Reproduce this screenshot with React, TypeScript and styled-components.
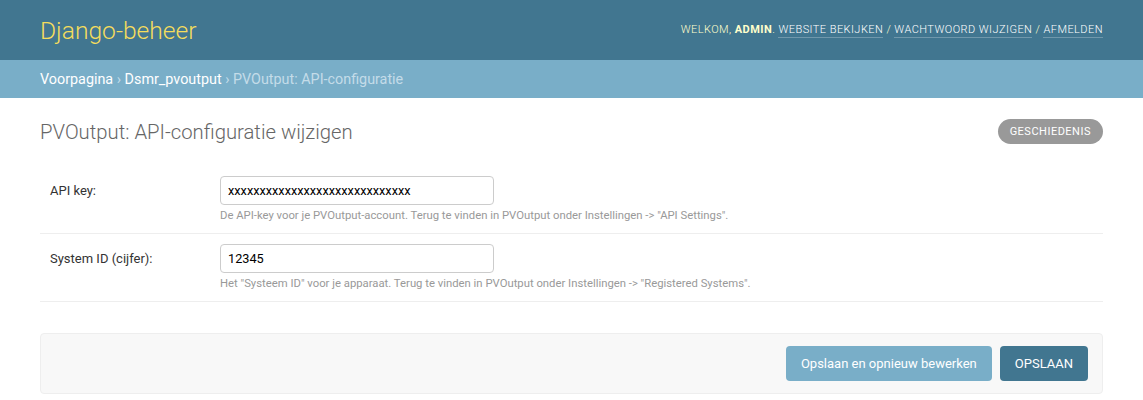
import React from "react";
import styled, { createGlobalStyle } from "styled-components";

const GlobalStyle = createGlobalStyle`
  html, body {
    margin: 0;
    padding: 0;
    background: #fff;
  }
  body {
    font-family: Roboto, "Liberation Sans", sans-serif;
    font-size: 14px;
    color: #333;
  }
  * {
    box-sizing: border-box;
  }
`;

const Header = styled.header`
  height: 60px;
  padding: 0 40px;
  background: #417690;
  color: #ffc;
  display: flex;
  align-items: center;
  justify-content: space-between;
`;

const Branding = styled.h1`
  margin: 0;
  font-size: 24.6px;
  font-weight: 300;
  color: #f5dd5d;
`;

const UserTools = styled.div`
  font-size: 11px;
  letter-spacing: 0.45px;
  text-transform: uppercase;
  font-weight: 300;
  color: #ffc;
  margin-top: -1px;

  strong {
    font-weight: 700;
  }
`;

const ToolLink = styled.a`
  color: #fff;
  text-decoration: none;
  border-bottom: 1px solid rgba(255, 255, 255, 0.25);
  padding-bottom: 1px;
`;

const Breadcrumbs = styled.nav`
  height: 38px;
  padding: 0 40px;
  background: #79aec8;
  color: #c4dce8;
  font-size: 14.35px;
  display: flex;
  align-items: center;
`;

const Crumb = styled.a`
  color: #fff;
  text-decoration: none;
`;

const Content = styled.main`
  padding: 20px 40px;
`;

const TitleRow = styled.div`
  display: flex;
  align-items: flex-start;
  justify-content: space-between;
  margin-bottom: 20px;
`;

const Title = styled.h1`
  margin: 0;
  padding-top: 1px;
  font-size: 20.3px;
  line-height: 27px;
  font-weight: 300;
  color: #666;
`;

const HistoryButton = styled.a`
  display: flex;
  align-items: center;
  height: 25px;
  padding: 0 12px;
  margin-top: 1px;
  border-radius: 15px;
  background: #999;
  color: #fff;
  font-size: 11px;
  letter-spacing: 0.5px;
  text-transform: uppercase;
  text-decoration: none;
`;

const Fieldset = styled.fieldset`
  margin: 0 0 31px;
  padding: 0;
  border: none;
`;

const FormRow = styled.div`
  display: flex;
  padding: 10px;
  border-bottom: 1px solid #eee;
  font-size: 13px;
`;

const Label = styled.label`
  width: 170px;
  flex-shrink: 0;
  padding-top: 7px;
  color: #333;
`;

const Field = styled.div`
  display: flex;
  flex-direction: column;
`;

const TextInput = styled.input`
  width: 274px;
  height: 29px;
  padding: 5px 7px;
  border: 1px solid #ccc;
  border-radius: 4px;
  font-family: Roboto, "Liberation Sans", sans-serif;
  font-size: 12.7px;
  color: #000;
  outline: none;
`;

const Help = styled.p`
  margin: 4px 0 0;
  font-size: 11.3px;
  line-height: 14px;
  color: #999;
`;

const SubmitRow = styled.div`
  display: flex;
  justify-content: flex-end;
  gap: 8px;
  padding: 12px 14px;
  background: #f8f8f8;
  border: 1px solid #eee;
  border-radius: 4px;
`;

const SubmitButton = styled.button<{ $primary?: boolean }>`
  height: 35px;
  padding: 0 15px;
  border: none;
  border-radius: 4px;
  background: ${({ $primary }) => ($primary ? "#417690" : "#79aec8")};
  color: #fff;
  font-family: Roboto, "Liberation Sans", sans-serif;
  font-size: 13px;
  text-transform: ${({ $primary }) => ($primary ? "uppercase" : "none")};
  cursor: pointer;
`;

const fields = [
  {
    id: "api_key",
    label: "API key:",
    value: "xxxxxxxxxxxxxxxxxxxxxxxxxxxxx",
    help: 'De API-key voor je PVOutput-account. Terug te vinden in PVOutput onder Instellingen -> "API Settings".',
  },
  {
    id: "system_id",
    label: "System ID (cijfer):",
    value: "12345",
    help: 'Het "Systeem ID" voor je apparaat. Terug te vinden in PVOutput onder Instellingen -> "Registered Systems".',
  },
];

export default function App() {
  return (
    <>
      <GlobalStyle />
      <Header>
        <Branding>Django-beheer</Branding>
        <UserTools>
          Welkom, <strong>admin</strong>.{" "}
          <ToolLink href="#">Website bekijken</ToolLink> /{" "}
          <ToolLink href="#">Wachtwoord wijzigen</ToolLink> /{" "}
          <ToolLink href="#">Afmelden</ToolLink>
        </UserTools>
      </Header>
      <Breadcrumbs>
        <Crumb href="#">Voorpagina</Crumb>&nbsp;›&nbsp;
        <Crumb href="#">Dsmr_pvoutput</Crumb>&nbsp;›&nbsp;PVOutput: API-configuratie
      </Breadcrumbs>
      <Content>
        <TitleRow>
          <Title>PVOutput: API-configuratie wijzigen</Title>
          <HistoryButton href="#">Geschiedenis</HistoryButton>
        </TitleRow>
        <form onSubmit={(e) => e.preventDefault()}>
          <Fieldset>
            {fields.map((f) => (
              <FormRow key={f.id}>
                <Label htmlFor={f.id}>{f.label}</Label>
                <Field>
                  <TextInput id={f.id} type="text" defaultValue={f.value} />
                  <Help>{f.help}</Help>
                </Field>
              </FormRow>
            ))}
          </Fieldset>
          <SubmitRow>
            <SubmitButton type="submit">Opslaan en opnieuw bewerken</SubmitButton>
            <SubmitButton type="submit" $primary>
              Opslaan
            </SubmitButton>
          </SubmitRow>
        </form>
      </Content>
    </>
  );
}
